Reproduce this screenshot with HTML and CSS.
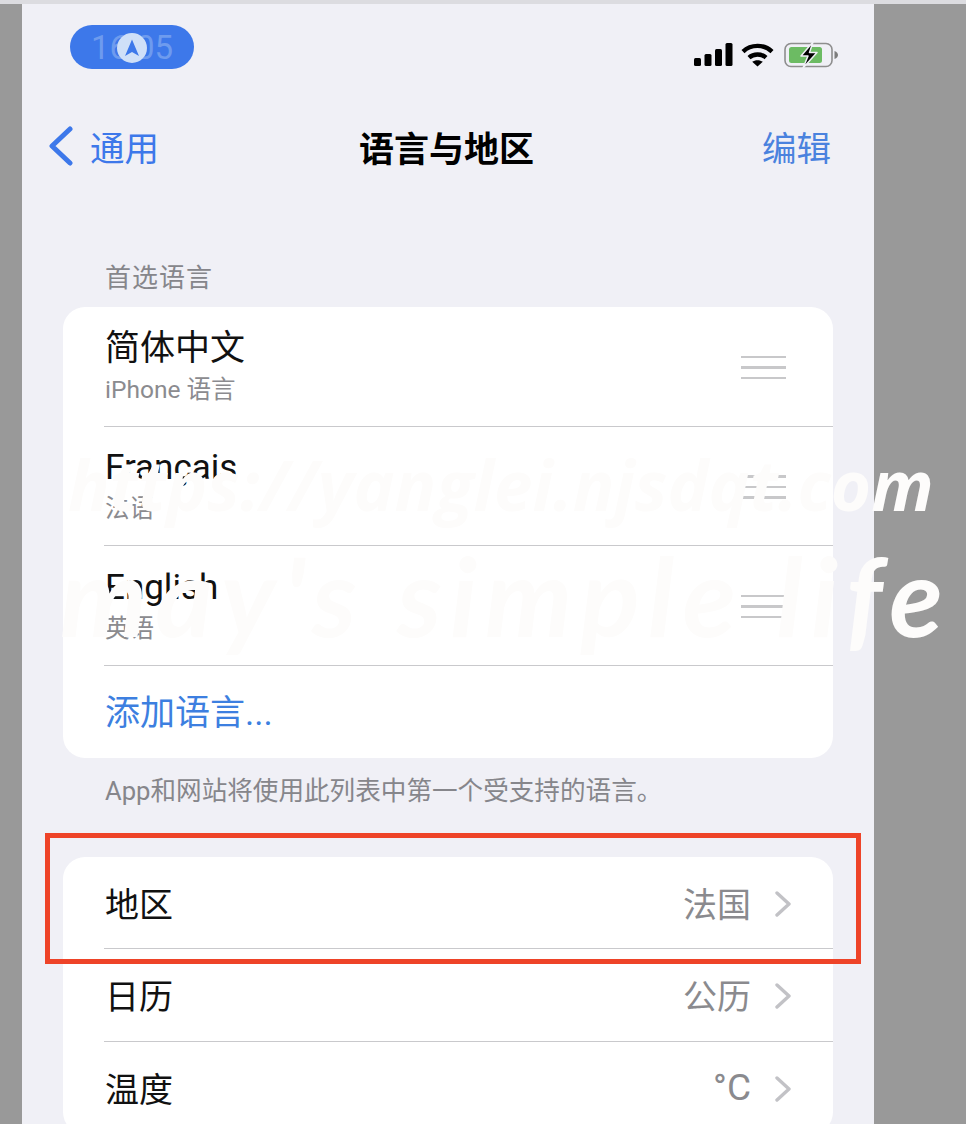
FILE: index.html
```html
<!DOCTYPE html>
<html lang="zh-CN">
  <head>
    <meta charset="UTF-8" />
    <meta name="viewport" content="width=device-width, initial-scale=1.0" />
    <title>语言与地区</title>
    <link rel="stylesheet" href="styles.css">
  </head>
  <body>
    <div class="top-strip"></div>
    <div class="phone">
      <div class="status">
        <div class="pill">
          <span class="pill-time">16:05</span>
          <span class="pill-dot">
            <svg width="20" height="20" viewBox="0 0 20 20"><path d="M10 1.5 L17 18 L10 14 L3 18 Z" fill="#3d78ea"/></svg>
          </span>
        </div>
        <div class="status-icons">
          <svg class="signal" width="39" height="24" viewBox="0 0 39 24">
            <rect x="0" y="15" width="7" height="8" rx="1.5"/>
            <rect x="10.5" y="11" width="7" height="12" rx="1.5"/>
            <rect x="21" y="6" width="7" height="17" rx="1.5"/>
            <rect x="31.5" y="0" width="7" height="23" rx="1.5"/>
          </svg>
          <svg width="33" height="24" viewBox="0 0 33 24" fill="none" stroke="#000" stroke-width="4.4">
            <path d="M2 8.6 C10 1 23 1 31 8.6"/>
            <path d="M8 14.6 C12.6 10.4 20.4 10.4 25 14.6"/>
            <path d="M16.5 23.5 L11.2 18.8 C14 16.6 19 16.6 21.8 18.8 Z" fill="#000" stroke="none"/>
          </svg>
          <svg class="battery" width="55" height="26" viewBox="0 0 55 26">
            <rect x="1" y="1.5" width="47" height="23" rx="6" fill="none" stroke="#8e8e8e" stroke-width="1.6"/>
            <rect x="5" y="5" width="33" height="16" rx="2.5" fill="#6cbb63"/>
            <path d="M50.5 9 C53 10 54 11.5 54 13 C54 14.5 53 16 50.5 17 Z" fill="#7d7d7d"/>
            <path d="M29 0 L17 14 L24 14 L19 26 L33 10.5 L25.5 10.5 Z" fill="#000" stroke="#f0f0f6" stroke-width="1.5" stroke-linejoin="round"/>
          </svg>
        </div>
      </div>

      <div class="nav">
        <a class="nav-back">
          <svg width="26" height="40" viewBox="0 0 26 40" fill="none" stroke="#3d78ea" stroke-width="5" stroke-linecap="round" stroke-linejoin="round"><path d="M22 3 L4 20 L22 37"/></svg>
          <span>通用</span>
        </a>
        <div class="nav-title">语言与地区</div>
        <a class="nav-edit">编辑</a>
      </div>

      <div class="section-label">首选语言</div>
      <div class="card">
        <div class="lang-row">
          <div class="lang-text">
            <div class="lang-name">简体中文</div>
            <div class="lang-sub">iPhone 语言</div>
          </div>
          <div class="handle"><i></i><i></i><i></i></div>
        </div>
        <div class="lang-row">
          <div class="lang-text">
            <div class="lang-name">Français</div>
            <div class="lang-sub">法语</div>
          </div>
          <div class="handle"><i></i><i></i><i></i></div>
        </div>
        <div class="lang-row">
          <div class="lang-text">
            <div class="lang-name">English</div>
            <div class="lang-sub">英语</div>
          </div>
          <div class="handle"><i></i><i></i><i></i></div>
        </div>
        <div class="add-row">添加语言...</div>
      </div>
      <div class="section-note">App和网站将使用此列表中第一个受支持的语言。</div>

      <div class="card card-region">
        <div class="set-row">
          <span>地区</span>
          <span class="set-value">法国</span>
          <svg class="chev" width="16" height="26" viewBox="0 0 16 26" fill="none" stroke="#c2c2c6" stroke-width="3.4" stroke-linecap="round" stroke-linejoin="round"><path d="M2 2 L14 13 L2 24"/></svg>
        </div>
        <div class="set-row">
          <span>日历</span>
          <span class="set-value">公历</span>
          <svg class="chev" width="16" height="26" viewBox="0 0 16 26" fill="none" stroke="#c2c2c6" stroke-width="3.4" stroke-linecap="round" stroke-linejoin="round"><path d="M2 2 L14 13 L2 24"/></svg>
        </div>
        <div class="set-row">
          <span>温度</span>
          <span class="set-value set-unit">°C</span>
          <svg class="chev" width="16" height="26" viewBox="0 0 16 26" fill="none" stroke="#c2c2c6" stroke-width="3.4" stroke-linecap="round" stroke-linejoin="round"><path d="M2 2 L14 13 L2 24"/></svg>
        </div>
      </div>
    </div>

    <div class="red-box"></div>
    <div class="mark mark-url">https://yanglei.njsdqt.com</div>
    <div class="mark mark-life">may's simple life</div>
  </body>
</html>
```

FILE: styles.css
```css
html,
body {
  margin: 0;
  height: 1124px;
  overflow: hidden;
}
body {
  position: relative;
  background-color: #999999;
  font-family: Roboto, "Noto Sans CJK SC", sans-serif;
  color: #111;
}
.top-strip {
  height: 4px;
  background-color: #dcdce0;
}
.phone {
  width: 852px;
  height: 1120px;
  margin-left: 22px;
  background-color: #f0f0f6;
  overflow: hidden;
}

/* status bar */
.status {
  display: flex;
  justify-content: space-between;
  padding: 21px 35px 0 48px;
  height: 97px;
}
.pill {
  position: relative;
  width: 124px;
  height: 44px;
  border-radius: 22px;
  background-color: #3d78ea;
  display: flex;
  align-items: center;
  justify-content: center;
}
.pill-time {
  font-size: 33px;
  color: #6e9bee;
}
.pill-dot {
  position: absolute;
  left: 47px;
  top: 8px;
  width: 30px;
  height: 30px;
  border-radius: 50%;
  background-color: #cfe0f8;
  display: flex;
  align-items: center;
  justify-content: center;
}
.status-icons {
  display: flex;
  gap: 10px;
  padding-top: 18px;
  height: 26px;
}
.signal {
  margin-right: -2px;
}
.battery {
  margin-top: -1px;
}

/* nav */
.nav {
  position: relative;
  display: flex;
  justify-content: space-between;
  align-items: center;
  height: 48px;
  padding: 0 43px 0 26px;
  font-size: 34.5px;
  color: #3d78ea;
}
.nav-back {
  display: flex;
  align-items: center;
  gap: 16px;
}
.nav-edit {
  color: #4a82de;
}
.nav-title {
  position: absolute;
  left: 0;
  right: 0;
  text-align: center;
  padding-right: 3px;
  font-weight: 700;
  font-size: 35px;
  color: #000;
}

/* sections */
.section-label {
  margin: 90px 0 0 83px;
  font-size: 26px;
  letter-spacing: 1px;
  line-height: 36px;
  height: 47px;
  color: #86868b;
}
.card {
  margin-left: 41px;
  width: 770px;
  background-color: #fff;
  border-radius: 22px;
  overflow: hidden;
}
.lang-row {
  display: flex;
  align-items: center;
  justify-content: space-between;
  height: 119.5px;
  margin-left: 41px;
  padding-right: 47px;
  box-sizing: border-box;
  border-bottom: 1px solid #c9c9cc;
}
.lang-text {
  padding: 2px 0 0 1px;
}
.lang-name {
  font-size: 35px;
  line-height: 44px;
}
.lang-sub {
  margin-top: 1px;
  font-size: 24.5px;
  line-height: 36px;
  color: #8b8b8f;
}
.handle {
  display: flex;
  flex-direction: column;
  gap: 8px;
  width: 45px;
  margin-top: 2px;
}
.handle i {
  display: block;
  height: 2.5px;
  background-color: #c8c8ca;
}
.add-row {
  height: 92px;
  padding-left: 42px;
  font-size: 35px;
  line-height: 96px;
  color: #3d7fe0;
}
.section-note {
  margin: 15px 0 0 42px;
  padding-left: 41px;
  font-size: 25.6px;
  line-height: 36px;
  height: 84px;
  color: #86868b;
}
.set-row {
  display: flex;
  align-items: center;
  height: 92.5px;
  margin-left: 41px;
  padding: 0 42px 0 1px;
  box-sizing: border-box;
  border-bottom: 1px solid #c9c9cc;
  font-size: 34px;
}
.set-value {
  margin-left: auto;
  color: #8a8a8e;
}
.set-unit {
  font-size: 37px;
}
.chev {
  margin-left: 24px;
  margin-top: 3px;
}

/* things lying over the screenshot */
.red-box {
  position: absolute;
  left: 45px;
  top: 833px;
  width: 816px;
  height: 131px;
  box-sizing: border-box;
  border: 5px solid #ee4328;
}
.mark {
  position: absolute;
  color: #fdfcfb;
  font-style: italic;
  white-space: nowrap;
}
.mark-url {
  left: 68px;
  top: 444px;
  font-family: "Open Sans", sans-serif;
  font-weight: 700;
  font-size: 69px;
  line-height: 80px;
}
.mark-life {
  left: 60px;
  top: 519px;
  font-family: Lato, sans-serif;
  font-weight: 700;
  font-size: 110px;
  letter-spacing: 8.2px;
  line-height: 150px;
}
```
